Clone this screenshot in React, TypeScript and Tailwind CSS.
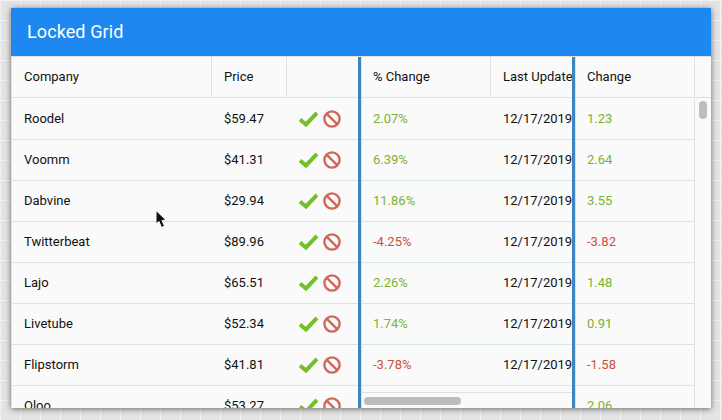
const rows = [
  { name: 'Roodel', price: '$59.47', pct: '2.07%', change: '1.23' },
  { name: 'Voomm', price: '$41.31', pct: '6.39%', change: '2.64' },
  { name: 'Dabvine', price: '$29.94', pct: '11.86%', change: '3.55' },
  { name: 'Twitterbeat', price: '$89.96', pct: '-4.25%', change: '-3.82' },
  { name: 'Lajo', price: '$65.51', pct: '2.26%', change: '1.48' },
  { name: 'Livetube', price: '$52.34', pct: '1.74%', change: '0.91' },
  { name: 'Flipstorm', price: '$41.81', pct: '-3.78%', change: '-1.58' },
  { name: 'Oloo', price: '$53.27', pct: '3.95%', change: '2.06' },
];

const tone = (value: string) => (value.startsWith('-') ? 'text-[#cc4f3e]' : 'text-[#7ab32e]');

function Actions() {
  return (
    <div className="flex items-center gap-[5px] pl-[12px]">
      <svg width="19" height="16" viewBox="0 0 19 16">
        <path d="M1 8.5 L7 13.5 L18 2" fill="none" stroke="#74bf2a" strokeWidth="4" />
      </svg>
      <svg width="18" height="18" viewBox="0 0 18 18">
        <circle cx="9" cy="9" r="7.6" fill="none" stroke="#d0675a" strokeWidth="2.4" />
        <path d="M3.8 3.8 L14.2 14.2" stroke="#d0675a" strokeWidth="2.4" />
      </svg>
    </div>
  );
}

function HeaderCell({ label, width, last }: { label: string; width: string; last?: boolean }) {
  return (
    <div className={`${width} h-[40px] shrink-0 flex items-center pl-[12px] whitespace-nowrap overflow-hidden ${last ? '' : 'border-r border-[#e0e0e0]'}`}>
      {label}
    </div>
  );
}

function Splitter() {
  return <div className="relative z-10 w-[3px] shrink-0 bg-[#3d86c2] shadow-[1px_0_0_#c4e8fb]" />;
}

export default function App() {
  return (
    <div className="relative w-[722px] h-[420px] overflow-hidden bg-[#e4e4e4] bg-[linear-gradient(#f1f1f1_1px,transparent_1px),linear-gradient(90deg,#f1f1f1_1px,transparent_1px)] bg-[length:20px_20px] pt-[8px] pl-[11px] font-['Roboto',sans-serif] text-[13px] text-[#111111]">
      <div className="w-[700px] h-[400px] flex flex-col overflow-hidden bg-[#fafafa] shadow-[0_1px_6px_rgba(0,0,0,0.55)]">
        <div className="h-[48px] shrink-0 flex items-center pl-[16px] pb-[1px] bg-[#1e88f0] text-white text-[18px] tracking-[0.1px]">
          Locked Grid
        </div>
        <div className="flex flex-1 min-h-0 border-t border-l border-[#e0e0e0]">
          <div className="w-[346px] shrink-0 overflow-hidden">
            <div className="flex border-b border-[#e0e0e0]">
              <HeaderCell label="Company" width="w-[200px]" />
              <HeaderCell label="Price" width="w-[75px]" />
              <HeaderCell label="" width="w-[71px]" last />
            </div>
            <div className="pt-[1px]">
              {rows.map((row) => (
                <div key={row.name} className="flex h-[41px] items-center border-b border-[#e0e0e0]">
                  <div className="w-[200px] pl-[12px]">{row.name}</div>
                  <div className="w-[75px] pl-[12px]">{row.price}</div>
                  <Actions />
                </div>
              ))}
            </div>
          </div>
          <Splitter />
          <div className="w-[211px] shrink-0 flex flex-col overflow-hidden">
            <div className="flex border-b border-[#e0e0e0]">
              <HeaderCell label="% Change" width="w-[130px]" />
              <HeaderCell label="Last Update" width="w-[81px]" last />
            </div>
            <div className="h-[294px] shrink-0 overflow-hidden pt-[1px]">
              {rows.slice(0, 7).map((row) => (
                <div key={row.name} className="flex h-[41px] items-center border-b border-[#d5e6f0]">
                  <div className={`w-[130px] pl-[12px] ${tone(row.pct)}`}>{row.pct}</div>
                  <div className="w-[81px] pl-[12px] whitespace-nowrap overflow-hidden">12/17/2019</div>
                </div>
              ))}
            </div>
            <div className="flex-1 flex items-center pl-[3px] border-t border-[#e0e0e0]">
              <div className="w-[97px] h-[8px] rounded-full bg-[#bdbdbd]" />
            </div>
          </div>
          <Splitter />
          <div className="flex-1 overflow-hidden">
            <div className="flex border-b border-[#e0e0e0]">
              <HeaderCell label="Change" width="w-[120px]" />
            </div>
            <div className="pt-[1px]">
              {rows.map((row) => (
                <div key={row.name} className="flex h-[41px] w-[120px] items-center border-b border-r border-[#e0e0e0]">
                  <div className={`pl-[12px] ${tone(row.change)}`}>{row.change}</div>
                </div>
              ))}
            </div>
          </div>
        </div>
      </div>
      <div className="absolute left-[699px] top-[101px] w-[8px] h-[18px] rounded-full bg-[#bdbdbd]" />
      <svg className="absolute left-[154px] top-[209px]" width="14" height="20" viewBox="0 0 14 20">
        <path d="M2 1.5 L2 15 L5 12.5 L7.5 18.5 L10.5 17 L8 11.5 L12 11 Z" fill="#111111" stroke="#ffffff" strokeWidth="1" />
      </svg>
    </div>
  );
}
